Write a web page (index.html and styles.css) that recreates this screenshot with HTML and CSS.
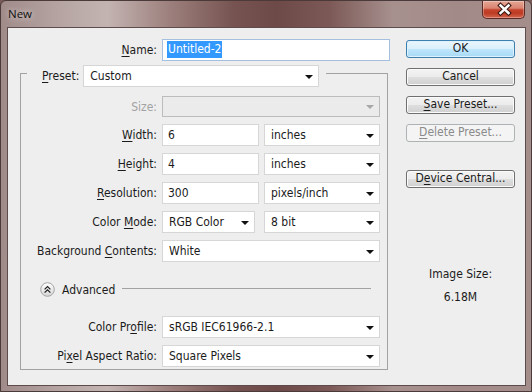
FILE: index.html
```html
<!DOCTYPE html>
<html lang="en">
<head>
  <meta charset="UTF-8">
  <title>New</title>
  <link rel="stylesheet" href="styles.css">
</head>
<body>
  <div class="window">
    <div class="titlebar">
      <span class="title">New</span>
      <div class="close">
        <svg width="43" height="17" viewBox="0 0 43 17">
          <path d="M17.5 4.5 L25.5 12 M25.5 4.5 L17.5 12" stroke="#3b1a14" stroke-width="4.6" stroke-linecap="square" fill="none"/>
          <path d="M17.5 4.5 L25.5 12 M25.5 4.5 L17.5 12" stroke="#ffffff" stroke-width="2.4" stroke-linecap="square" fill="none"/>
        </svg>
      </div>
    </div>

    <div class="client">
      <div class="form">
        <div class="name-row">
          <span class="label"><u>N</u>ame:</span>
          <div class="field focused"><span class="selected">Untitled-2</span></div>
        </div>

        <div class="group">
          <div class="group-head">
            <span class="label"><u>P</u>reset:</span>
            <div class="select preset">Custom</div>
          </div>

          <div class="rows">
            <span class="label disabled">Size:</span>
            <div class="select off"></div>

            <span class="label"><u>W</u>idth:</span>
            <div class="pair">
              <div class="field num">6</div>
              <div class="select unit">inches</div>
            </div>

            <span class="label"><u>H</u>eight:</span>
            <div class="pair">
              <div class="field num">4</div>
              <div class="select unit">inches</div>
            </div>

            <span class="label"><u>R</u>esolution:</span>
            <div class="pair">
              <div class="field num">300</div>
              <div class="select unit">pixels/inch</div>
            </div>

            <span class="label">Color <u>M</u>ode:</span>
            <div class="pair">
              <div class="select mode">RGB Color</div>
              <div class="select unit">8 bit</div>
            </div>

            <span class="label">Background <u>C</u>ontents:</span>
            <div class="select">White</div>
          </div>

          <div class="advanced">
            <svg width="15" height="15" viewBox="0 0 15 15">
              <defs>
                <linearGradient id="knob" x1="0" y1="0" x2="0" y2="1">
                  <stop offset="0" stop-color="#ffffff"/>
                  <stop offset="1" stop-color="#d6d6d6"/>
                </linearGradient>
              </defs>
              <circle cx="7.5" cy="7.5" r="6.8" fill="url(#knob)" stroke="#a3a3a3"/>
              <path d="M4.6 7.4 L7.5 4.6 L10.4 7.4 M4.6 10.6 L7.5 7.8 L10.4 10.6" stroke="#222" stroke-width="1.3" fill="none"/>
            </svg>
            <span>Advanced</span>
            <div class="rule"></div>
          </div>

          <div class="rows extra">
            <span class="label">Color Pr<u>o</u>file:</span>
            <div class="select">sRGB IEC61966-2.1</div>

            <span class="label">Pi<u>x</u>el Aspect Ratio:</span>
            <div class="select">Square Pixels</div>
          </div>
        </div>
      </div>

      <div class="side">
        <div class="btn default">OK</div>
        <div class="btn">Cancel</div>
        <div class="btn"><u>S</u>ave Preset...</div>
        <div class="btn disabled"><u>D</u>elete Preset...</div>
        <div class="btn central">D<u>e</u>vice Central...</div>

        <div class="image-size">
          <div>Image Size:</div>
          <div class="size-value">6.18M</div>
        </div>
      </div>
    </div>
  </div>
</body>
</html>
```

FILE: styles.css
```css
* {
  box-sizing: border-box;
}
html, body {
  margin: 0;
}
body {
  width: 532px;
  height: 392px;
  overflow: hidden;
  font-family: "DejaVu Sans Condensed", "DejaVu Sans", sans-serif;
  font-size: 12px;
  color: #1b1b1b;
  background: #7a5a58;
}
u {
  text-decoration-thickness: 1px;
  text-underline-offset: 2px;
}

/* window frame */
.window {
  width: 532px;
  height: 392px;
  display: flex;
  flex-direction: column;
  padding: 0 5px 5px 6px;
  border: 1px solid #4a3a39;
  border-radius: 6px 6px 0 0;
  background: linear-gradient(90deg, #a08b89 0%, #b3a2a0 10%, #c3b4b2 20%, #9c7f7c 32%, #765350 44%, #6d4a47 52%, #7c5956 62%, #a7918f 74%, #a28a88 86%, #a48e8c 100%);
}
.titlebar {
  height: 26px;
  display: flex;
  align-items: flex-start;
  padding-left: 1px;
}
.title {
  font-family: "Open Sans", "Noto Sans", sans-serif;
  font-size: 11.5px;
  line-height: 16px;
  padding-top: 5px;
  color: #111;
  text-shadow: 0 0 6px rgba(255, 255, 255, 0.8);
}
.close {
  margin-left: auto;
  margin-right: 1px;
  width: 43px;
  height: 18px;
  border: 1px solid #5b2a23;
  border-top: none;
  border-radius: 0 0 5px 5px;
  background: linear-gradient(#e6a795 0%, #d98470 42%, #c4432c 52%, #be3b23 72%, #d4654e 100%);
  box-shadow: inset 0 0 0 1px rgba(255, 255, 255, 0.3);
}
.close svg {
  display: block;
}

/* client area */
.client {
  width: 519px;
  height: 359px;
  border: 1px solid #5d4c4b;
  background: #eeeeee;
  display: grid;
  grid-template-columns: 382px 109px;
  column-gap: 16px;
  align-items: start;
  padding-top: 11px;
}
.label {
  text-align: right;
  white-space: nowrap;
}
.label.disabled {
  color: #a3a3a3;
}

.name-row {
  display: grid;
  grid-template-columns: 149px 228px;
  column-gap: 5px;
  align-items: center;
}

.field,
.select {
  height: 22px;
  background: #ffffff;
  border: 1px solid #d6d6d6;
  display: flex;
  align-items: center;
  padding: 0 5px 1px 5px;
  white-space: nowrap;
}
.field.focused {
  border-color: #a4c0de;
  padding-left: 4px;
}
.selected {
  background: #3399ff;
  color: #ffffff;
  padding: 1px 1px;
  line-height: 15px;
}
.select {
  padding-left: 6px;
}
.select::after {
  content: "";
  margin-left: auto;
  border-left: 4px solid transparent;
  border-right: 4px solid transparent;
  border-top: 4px solid #111;
  margin-top: 2px;
}
.select.off {
  height: 21px;
  background: #ebebeb;
  border-color: #bcbcbc;
}
.select.off::after {
  border-top-color: #a8a8a8;
}

/* group box */
.group {
  margin: 12px 0 0 12px;
  width: 368px;
  border: 1px solid #a2a2a2;
  padding-bottom: 2px;
}
.group-head {
  display: flex;
  align-items: center;
  gap: 4px;
  width: fit-content;
  margin: -9px 0 0 6px;
  padding: 0 7px 0 15px;
  background: #eeeeee;
}
.select.preset {
  width: 236px;
}
.rows {
  display: grid;
  grid-template-columns: 136px 218px;
  column-gap: 5px;
  row-gap: 7px;
  align-items: center;
  margin-top: 9px;
}
.pair {
  display: flex;
  justify-content: space-between;
}
.field.num {
  width: 97px;
}
.select.unit {
  width: 116px;
}
.select.mode {
  width: 93px;
}

.advanced {
  display: flex;
  align-items: center;
  gap: 7px;
  height: 15px;
  margin-top: 20px;
  padding: 0 16px 0 19px;
}
.advanced svg {
  display: block;
}
.rule {
  flex: 1;
  border-top: 1px solid #a2a2a2;
  margin-bottom: 3px;
}
.rows.extra {
  margin-top: 19px;
}

/* buttons column */
.side {
  display: flex;
  flex-direction: column;
  gap: 10px;
  margin-top: 1px;
}
.btn {
  height: 18px;
  border: 1px solid #707070;
  border-radius: 3px;
  background: linear-gradient(#f3f3f3 0%, #ececec 48%, #dedede 52%, #d0d0d0 100%);
  box-shadow: inset 0 0 0 1px #fbfbfb;
  text-align: center;
  line-height: 15px;
  white-space: nowrap;
}
.btn.default {
  border-color: #3c7fb1;
  background: linear-gradient(#eaf6fd 0%, #d9f0fc 48%, #bee6fd 52%, #a7d9f5 100%);
  box-shadow: inset 0 0 0 1px #dff2fc;
}
.btn.disabled {
  border-color: #adb2b5;
  background: #f4f4f4;
  box-shadow: none;
  color: #8a8a8a;
}
.btn.central {
  margin-top: 18px;
}
.image-size {
  margin-top: 69px;
  text-align: center;
  line-height: 14px;
}
.size-value {
  margin-top: 9px;
}
```
